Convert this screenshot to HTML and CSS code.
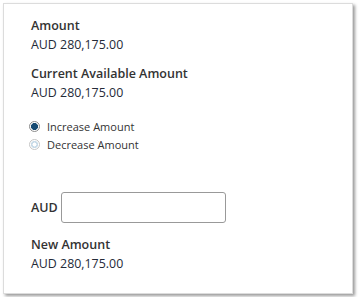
FILE: index.html
```html
<!DOCTYPE html>
<html lang="en">
  <head>
    <meta charset="UTF-8" />
    <meta name="viewport" content="width=device-width, initial-scale=1.0" />
    <title>Adjust Amount</title>
    <link rel="stylesheet" href="styles.css">
  </head>
  <body>
    <div class="card">
      <div class="field">
        <div class="field-label">Amount</div>
        <div class="field-value">AUD 280,175.00</div>
      </div>

      <div class="field">
        <div class="field-label">Current Available Amount</div>
        <div class="field-value">AUD 280,175.00</div>
      </div>

      <div class="radio-group">
        <label class="radio-row">
          <input type="radio" name="mode" class="radio" checked />
          <span>Increase Amount</span>
        </label>
        <label class="radio-row">
          <input type="radio" name="mode" class="radio" />
          <span>Decrease Amount</span>
        </label>
      </div>

      <div class="amount-row">
        <span class="currency">AUD</span>
        <input type="text" class="amount-input" />
      </div>

      <div class="field">
        <div class="field-label">New Amount</div>
        <div class="field-value">AUD 280,175.00</div>
      </div>
    </div>
  </body>
</html>
```

FILE: styles.css
```css
body {
  font-family: "Open Sans", "Noto Sans", sans-serif;
  font-size: 12px;
  background-color: #fff;
  color: #333;
  margin: 0;
  padding: 0;
}

.card {
  margin: 3px;
  width: 350px;
  height: 291px;
  box-sizing: border-box;
  border: 1px solid #dcdcdc;
  background-color: #fff;
  box-shadow: 2px 2px 3px rgba(0, 0, 0, 0.4);
  padding: 12px 27px 0;
}

.field {
  margin-bottom: 10px;
}

.field-label {
  font-weight: 600;
  font-size: 12.5px;
  line-height: 19px;
  color: #333;
}

.field-value {
  font-size: 12.4px;
  line-height: 19px;
  color: #242a38;
}

.radio-group {
  margin-top: 15px;
}

.radio-row {
  display: flex;
  align-items: center;
  height: 18px;
  font-size: 11px;
  color: #333;
}

.radio {
  appearance: none;
  -webkit-appearance: none;
  width: 11px;
  height: 11px;
  margin: 0 7px 0 -2px;
  border: 1px solid #a8a8a8;
  border-radius: 50%;
  background-color: #fff;
  box-sizing: border-box;
}

.radio:checked {
  background: radial-gradient(circle, #164a72 0 3.2px, #fff 3.8px);
  border-color: #8c8c8c;
}

.radio:not(:checked) {
  border-color: #c6c6c6;
  background: radial-gradient(circle, #fff 0 1.8px, #c9dbe8 2.2px 3.4px, #fff 3.8px);
}

.amount-row {
  display: flex;
  align-items: center;
  margin-top: 39px;
  margin-bottom: 12px;
}

.currency {
  font-weight: 600;
  font-size: 12.5px;
  width: 30px;
}

.amount-input {
  width: 165px;
  height: 31px;
  box-sizing: border-box;
  border: 1px solid #999;
  border-radius: 3px;
  padding: 0 6px;
  font-family: inherit;
}
```
